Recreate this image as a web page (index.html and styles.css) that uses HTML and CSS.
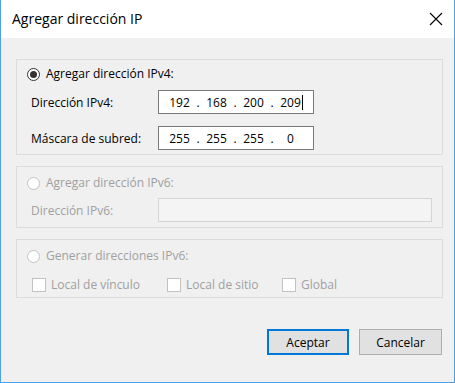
FILE: index.html
```html
<!DOCTYPE html>
<html lang="es">
<head>
<meta charset="utf-8">
<title>Agregar dirección IP</title>
<link rel="stylesheet" href="styles.css">
</head>
<body>
<div class="window">
  <div class="titlebar">
    <span class="title">Agregar dirección IP</span>
    <svg class="close" width="14" height="14" viewBox="0 0 14 14"><path d="M1 1 L13 13 M13 1 L1 13" stroke="#000" stroke-width="1.1" fill="none"/></svg>
  </div>
  <div class="content">
    <div class="group g1">
      <div class="optrow">
        <span class="radio checked"></span>
        <span class="optlabel">Agregar dirección IPv4:</span>
      </div>
      <div class="fields">
        <span class="flabel">Dirección IPv4:</span>
        <div class="ipbox">
          <span class="oct">192</span><span class="dot">.</span><span class="oct">168</span><span class="dot">.</span><span class="oct">200</span><span class="dot">.</span><span class="oct">209<span class="caret"></span></span>
        </div>
        <span class="flabel">Máscara de subred:</span>
        <div class="ipbox">
          <span class="oct">255</span><span class="dot">.</span><span class="oct">255</span><span class="dot">.</span><span class="oct">255</span><span class="dot">.</span><span class="oct">0</span>
        </div>
      </div>
    </div>
    <div class="group g2 disabled">
      <div class="optrow">
        <span class="radio"></span>
        <span class="optlabel">Agregar dirección IPv6:</span>
      </div>
      <div class="fields wide">
        <span class="flabel">Dirección IPv6:</span>
        <div class="textbox off"></div>
      </div>
    </div>
    <div class="group g3 disabled">
      <div class="optrow">
        <span class="radio"></span>
        <span class="optlabel">Generar direcciones IPv6:</span>
      </div>
      <div class="checks">
        <div class="check"><span class="box"></span><span>Local de vínculo</span></div>
        <div class="check"><span class="box"></span><span>Local de sitio</span></div>
        <div class="check"><span class="box"></span><span>Global</span></div>
      </div>
    </div>
    <div class="buttons">
      <button class="btn default">Aceptar</button>
      <button class="btn">Cancelar</button>
    </div>
  </div>
</div>
</body>
</html>
```
FILE: styles.css
```css
* { box-sizing: border-box; }
html, body { margin: 0; padding: 0; background: #f0f0f0; }
body { font-family: "Open Sans", "Noto Sans", sans-serif; font-size: 12px; color: #000; }

.window {
  width: 455px;
  height: 383px;
  border: 1px solid #4ea1e6;
  border-top: none;
  background: #f0f0f0;
  display: flex;
  flex-direction: column;
}

.titlebar {
  height: 38px;
  background: #fff;
  display: flex;
  align-items: center;
  justify-content: space-between;
  padding: 0 11px 1px 11px;
  flex: none;
}
.title { font-size: 14px; color: #000; }
.close { display: block; margin-right: 0; }

.content {
  padding: 21px 11px 0 15px;
  display: flex;
  flex-direction: column;
}

.group {
  border: 1px solid #dcdcdc;
  display: flex;
  flex-direction: column;
}
.g1 { height: 96px; padding: 6px 0 0 10px; }
.g2 { height: 62px; padding: 8px 0 0 10px; margin-top: 11px; }
.g3 { height: 59px; padding: 8px 0 0 10px; margin-top: 11px; }

.optrow { height: 16px; display: flex; align-items: center; }
.optlabel { margin-left: 6px; line-height: 16px; }

.radio {
  width: 13px; height: 13px;
  border-radius: 50%;
  border: 1px solid #333;
  background: #fff;
  display: flex; align-items: center; justify-content: center;
  flex: none;
}
.radio.checked::after {
  content: "";
  width: 7px; height: 7px;
  border-radius: 50%;
  background: #333;
}

.disabled { color: #a0a0a0; }
.disabled .radio { border-color: #c2c2c2; }

.fields {
  display: grid;
  grid-template-columns: 127px 156px;
  grid-auto-rows: 24px;
  row-gap: 12px;
  margin-top: 8px;
  margin-left: 4px;
  align-items: center;
}
.fields.wide { grid-template-columns: 127px 274px; margin-top: 7px; }

.ipbox {
  height: 24px;
  border: 1px solid #7a7a7a;
  background: #fff;
  display: flex;
  align-items: center;
  padding-left: 9px;
  font-size: 12px;
}
.oct { width: 23px; text-align: center; position: relative; }
.dot { width: 14px; text-align: center; }
.caret {
  position: absolute;
  right: -1px; top: 1px;
  width: 1px; height: 15px;
  background: #000;
}

.textbox.off {
  height: 24px;
  border: 1px solid #d4d4d4;
  background: #f4f4f4;
}

.checks {
  display: grid;
  grid-template-columns: 135px 115px auto;
  margin-top: 12px;
  margin-left: 5px;
  height: 16px;
}
.check { display: flex; align-items: center; }
.check .box {
  width: 14px; height: 14px;
  border: 1px solid #c2c2c2;
  background: #fff;
  margin-right: 5px;
  flex: none;
}

.buttons {
  display: flex;
  justify-content: flex-end;
  gap: 10px;
  margin-top: 31px;
  padding-right: 1px;
}
.btn {
  font-family: "Open Sans", "Noto Sans", sans-serif;
  font-size: 12px;
  color: #000;
  height: 26px;
  background: #e1e1e1;
  border: 1px solid #adadad;
  padding: 0;
  margin: 0;
}
.btn.default { width: 82px; border: 2px solid #0078d7; }
.btn:not(.default) { width: 83px; }
```
